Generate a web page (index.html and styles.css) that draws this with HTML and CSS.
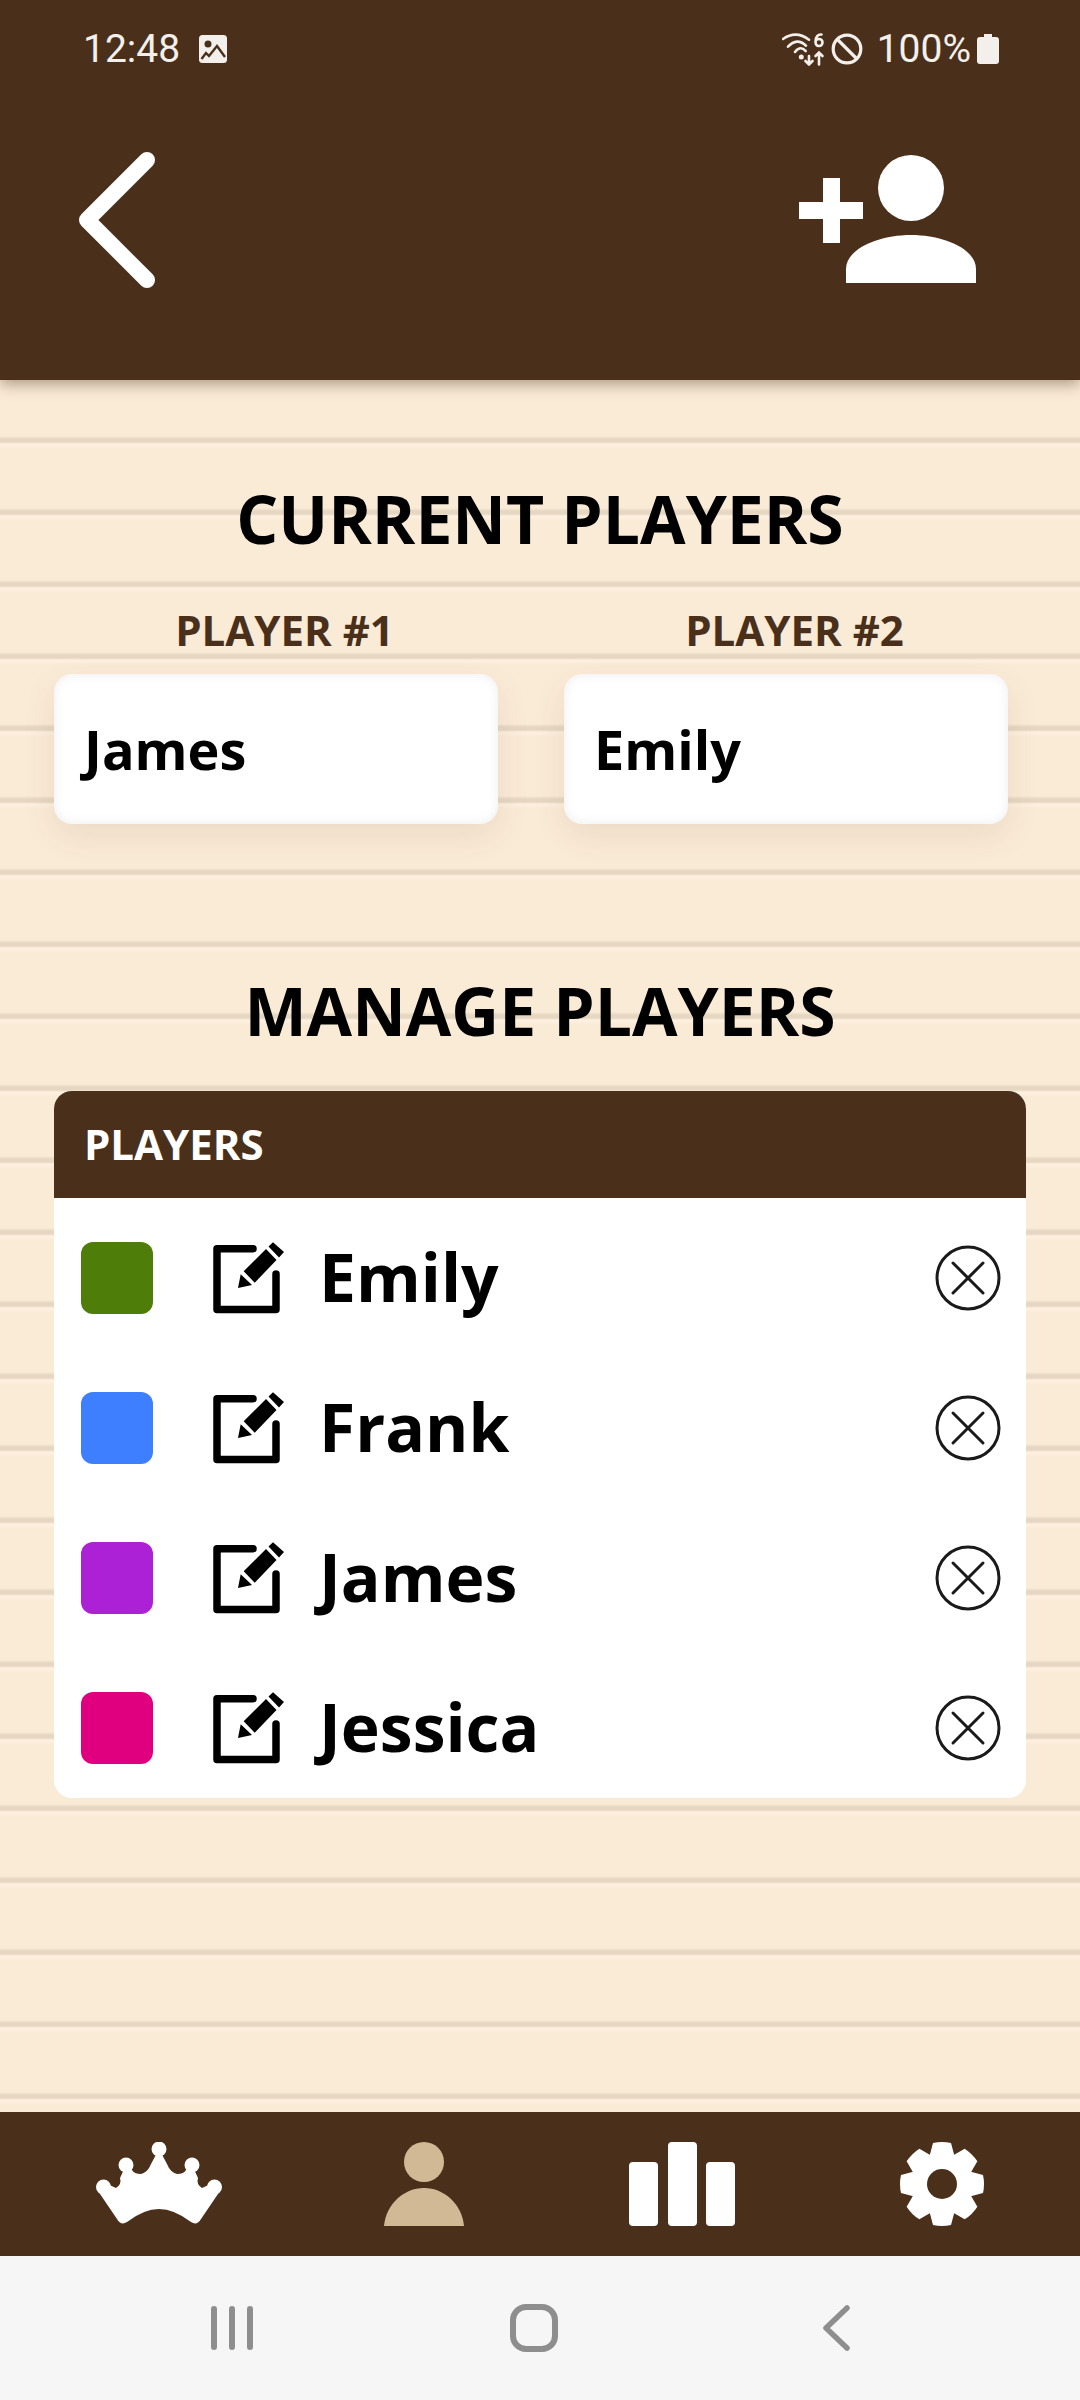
FILE: index.html
```html
<!DOCTYPE html>
<html lang="en">
<head>
  <meta charset="UTF-8" />
  <title>Players</title>
  <link rel="stylesheet" href="styles.css">
</head>
<body>
  <header class="top">
    <div class="status">
      <div class="status-left">
        <span class="clock">12:48</span>
        <svg class="pic-icon" viewBox="0 0 28 28">
          <rect width="28" height="28" rx="3.500" fill="#f3f0ec"/>
          <circle cx="9" cy="9" r="3.500" fill="#4a301b"/>
          <path d="M2.500 24L7 18l3 3 8-10 8 11" fill="none" stroke="#4a301b" stroke-width="2.400"/>
        </svg>
      </div>
      <div class="status-right">
        <svg class="wifi-icon" viewBox="0 0 44 34" fill="none" stroke="#f3f0ec" stroke-width="2.600" stroke-linecap="round">
          <path d="M1 7Q14-2 27 7.700"/>
          <path d="M6 14.700Q15 5 24 13.700"/>
          <path d="M13 20Q18 13 23.700 19"/>
          <circle cx="19.300" cy="25" r="1.200" fill="#f3f0ec"/>
          <path d="M27 24v8.500M23.500 29l3.500 3.500 3.500-3.500"/>
          <path d="M37 20.500v12M33.500 24l3.500-3.500 3.500 3.500"/>
          <path d="M39.500 2.500C36 2 33.500 5 33.500 9.500c0 3 1.500 4.500 3.500 4.500s3.500-1.500 3.500-3.500-1.500-3.500-3.500-3.500-3.500 1.500-3.500 3"/>
        </svg>
        <svg class="ban-icon" viewBox="0 0 32 32" fill="none" stroke="#f3f0ec" stroke-width="3.200"><circle cx="16" cy="16" r="13.800"/><path d="M6.500 6.500l19 19"/></svg>
        <span class="battery-text">100%</span>
        <svg class="battery-icon" viewBox="0 0 22 30"><path fill="#f3f0ec" d="M7 0h8v3h4a3 3 0 0 1 3 3v21a3 3 0 0 1-3 3H3a3 3 0 0 1-3-3V6a3 3 0 0 1 3-3h4z"/></svg>
      </div>
    </div>
    <div class="toolbar">
      <svg class="back-icon" viewBox="0 0 80 140" fill="none" stroke="#fff" stroke-width="16" stroke-linecap="round" stroke-linejoin="round"><path d="M69 10L9 70l60 60"/></svg>
      <svg class="add-icon" viewBox="0 0 180 130" fill="#fff">
        <path d="M25 24h17v24h23v17H42v24H25V65H1V48h24z"/>
        <circle cx="113" cy="34" r="33"/>
        <path d="M48 129v-14c0-20 32-34 65-34s65 14 65 34v14z"/>
      </svg>
    </div>
  </header>

  <main class="content">
    <h2 class="heading first">CURRENT PLAYERS</h2>
    <div class="current">
      <div class="slot">
        <div class="slot-label">PLAYER #1</div>
        <div class="slot-box">James</div>
      </div>
      <div class="slot">
        <div class="slot-label">PLAYER #2</div>
        <div class="slot-box">Emily</div>
      </div>
    </div>

    <h2 class="heading second">MANAGE PLAYERS</h2>
    <section class="roster">
      <div class="roster-head">PLAYERS</div>

      <div class="row">
        <span class="swatch green"></span>
        <svg class="edit-icon" viewBox="0 0 72 72"><use href="#edit"/></svg>
        <span class="name">Emily</span>
        <svg class="remove-icon" viewBox="0 0 66 66"><use href="#remove"/></svg>
      </div>
      <div class="row">
        <span class="swatch blue"></span>
        <svg class="edit-icon" viewBox="0 0 72 72"><use href="#edit"/></svg>
        <span class="name">Frank</span>
        <svg class="remove-icon" viewBox="0 0 66 66"><use href="#remove"/></svg>
      </div>
      <div class="row">
        <span class="swatch purple"></span>
        <svg class="edit-icon" viewBox="0 0 72 72"><use href="#edit"/></svg>
        <span class="name">James</span>
        <svg class="remove-icon" viewBox="0 0 66 66"><use href="#remove"/></svg>
      </div>
      <div class="row">
        <span class="swatch pink"></span>
        <svg class="edit-icon" viewBox="0 0 72 72"><use href="#edit"/></svg>
        <span class="name">Jessica</span>
        <svg class="remove-icon" viewBox="0 0 66 66"><use href="#remove"/></svg>
      </div>
    </section>
  </main>

  <nav class="tabs">
    <svg class="tab crown" viewBox="0 0 126 84" fill="#fff">
      <circle cx="63" cy="7" r="7.500"/>
      <circle cx="30" cy="23" r="7.500"/>
      <circle cx="96" cy="23" r="7.500"/>
      <circle cx="7.500" cy="45" r="7.500"/>
      <circle cx="118.500" cy="45" r="7.500"/>
      <path d="M2 49L21 77Q25 84 31 80Q48 67 63 67Q78 67 95 80Q101 84 105 77L124 49L117 41L106 46Q100 42 102 36L96 23L90 28Q88 32 81 32Q74 30 71 22L63 7L55 22Q52 30 45 32Q38 32 36 28L30 23L24 36Q26 42 20 46L9 41Z"/>
    </svg>
    <svg class="tab person" viewBox="0 0 80 84" fill="#d2b995"><circle cx="40" cy="20" r="20"/><path d="M0 84C2 62 20 46 40 46s38 16 40 38z"/></svg>
    <div class="tab bars">
      <span class="bar short"></span>
      <span class="bar tall"></span>
      <span class="bar short"></span>
    </div>
    <svg class="tab gear" viewBox="0 0 84 84">
      <g fill="#fff">
        <use href="#tooth"/>
        <use href="#tooth" transform="rotate(45 42 42)"/>
        <use href="#tooth" transform="rotate(90 42 42)"/>
        <use href="#tooth" transform="rotate(135 42 42)"/>
        <circle cx="42" cy="42" r="30"/>
      </g>
      <circle cx="42" cy="42" r="15" fill="#4a301b"/>
    </svg>
  </nav>

  <div class="system-nav">
    <svg class="sys-icon recents" viewBox="0 0 42 44" fill="#8e8e8e"><rect x="0" width="6" height="44" rx="3"/><rect x="18" width="6" height="44" rx="3"/><rect x="36" width="6" height="44" rx="3"/></svg>
    <svg class="sys-icon home" viewBox="0 0 48 48" fill="none" stroke="#8e8e8e" stroke-width="6"><rect x="3" y="3" width="42" height="42" rx="13"/></svg>
    <svg class="sys-icon sys-back" viewBox="0 0 28 46" fill="none" stroke="#8e8e8e" stroke-width="5.500" stroke-linecap="round" stroke-linejoin="round"><path d="M25 3L4 23l21 20"/></svg>
  </div>

  <svg class="defs" width="0" height="0">
    <defs>
      <path id="tooth" d="M33 1Q42-1 51 1L55 16V68L51 83Q42 85 33 83L29 68V16Z"/>
      <g id="edit">
        <path fill="none" stroke="#000" stroke-width="7.500" stroke-linecap="round" stroke-linejoin="round" d="M40 6.700H4V67.500H63V32"/>
        <path d="M25 46L27.700 32.300L39 43ZM30.700 29.300L53 7L63.500 18L41.700 40.700ZM55.500 4.500L60 .3L71 10L66 15.500Z"/>
      </g>
      <g id="remove" fill="none" stroke="#1a1a1a" stroke-width="3" stroke-linecap="round">
        <circle cx="33" cy="33" r="31"/>
        <path d="M18 18l30 30M48 18L18 48"/>
      </g>
    </defs>
  </svg>
</body>
</html>
```

FILE: styles.css
```css
* {
  box-sizing: border-box;
}

html, body {
  margin: 0;
  padding: 0;
}

body {
  width: 1080px;
  height: 2400px;
  display: flex;
  flex-direction: column;
  overflow: hidden;
  font-family: 'Open Sans', sans-serif;
  background-color: #faebd7;
  color: #000;
}

/* top bar */
.top {
  height: 380px;
  flex: none;
  background-color: #4a301b;
  box-shadow: 0 4px 14px rgba(74, 48, 27, 0.45);
  position: relative;
  z-index: 2;
}

.status {
  height: 98px;
  padding: 0 81px 0 83px;
  display: flex;
  justify-content: space-between;
  align-items: center;
  color: #f3f0ec;
  font-family: Roboto, sans-serif;
  font-size: 39px;
}

.status-left, .status-right {
  display: flex;
  align-items: center;
}

.pic-icon {
  width: 28px;
  height: 28px;
  margin-left: 19px;
}

.wifi-icon {
  width: 44px;
  height: 34px;
}

.ban-icon {
  width: 32px;
  height: 32px;
  margin-left: 5px;
}

.battery-text {
  margin-left: 14px;
}

.battery-icon {
  width: 22px;
  height: 30px;
  margin-left: 6px;
}

.toolbar {
  padding: 52px 102px 0 78px;
  display: flex;
  justify-content: space-between;
  align-items: flex-start;
}

.back-icon {
  width: 80px;
  height: 140px;
}

.add-icon {
  width: 180px;
  height: 130px;
  margin-top: 4px;
}

/* ruled paper background */
.content {
  flex: 1;
  padding: 0 54px;
  background-color: #faebd7;
  background-image: repeating-linear-gradient(
    to bottom,
    transparent 0,
    transparent 56px,
    #e6d7c3 59px,
    #e6d7c3 62px,
    #fdf0de 64px,
    #fdf0de 66px,
    transparent 68px,
    transparent 72px
  );
}

.heading {
  margin: 0;
  text-align: center;
  font-size: 66px;
  font-weight: 700;
  line-height: 84px;
}

.first {
  margin-top: 96px;
}

.second {
  margin-top: 144px;
}

.current {
  display: flex;
  gap: 66px;
  margin-top: 42px;
}

.slot {
  width: 444px;
}

.slot-label {
  padding-left: 17px;
  text-align: center;
  font-size: 42px;
  font-weight: 700;
  line-height: 56px;
  color: #4a301b;
}

.slot-box {
  height: 150px;
  margin-top: 16px;
  padding-left: 30px;
  display: flex;
  align-items: center;
  font-size: 54px;
  font-weight: 700;
  background-color: #fff;
  border-radius: 18px;
  box-shadow: 0 12px 34px rgba(74, 48, 27, 0.09), inset 0 0 12px rgba(0, 0, 0, 0.07);
}

/* player list */
.roster {
  margin-top: 39px;
  width: 972px;
  height: 707px;
  background-color: #fff;
  border-radius: 18px;
  overflow: hidden;
}

.roster-head {
  height: 107px;
  margin-bottom: 5px;
  padding: 0 0 3px 30px;
  display: flex;
  align-items: center;
  font-size: 42px;
  font-weight: 700;
  color: #fff;
  background-color: #4a301b;
}

.row {
  height: 150px;
  padding: 0 25px 0 27px;
  display: flex;
  align-items: center;
}

.swatch {
  width: 72px;
  height: 72px;
  border-radius: 12px;
}

.green { background-color: #4f7d09; }
.blue { background-color: #3e7fff; }
.purple { background-color: #ac20d6; }
.pink { background-color: #e0007f; }

.edit-icon {
  width: 72px;
  height: 72px;
  margin-left: 60px;
}

.name {
  flex: 1;
  margin-left: 34px;
  padding-bottom: 5px;
  font-size: 66px;
  font-weight: 700;
}

.remove-icon {
  width: 66px;
  height: 66px;
}

/* bottom tabs */
.tabs {
  height: 144px;
  flex: none;
  display: flex;
  align-items: center;
  padding: 0 96px;
  background-color: #4a301b;
}

.crown {
  width: 126px;
  height: 84px;
}

.person {
  width: 80px;
  height: 84px;
  margin-left: 162px;
}

.bars {
  width: 106px;
  height: 84px;
  margin-left: 165px;
  display: flex;
  justify-content: space-between;
  align-items: flex-end;
}

.bar {
  width: 29px;
  background-color: #fff;
  border-radius: 4px;
}

.short { height: 64px; }
.tall { height: 84px; }

.gear {
  width: 84px;
  height: 84px;
  margin-left: 165px;
}

/* android nav */
.system-nav {
  height: 144px;
  flex: none;
  display: flex;
  align-items: center;
  padding-left: 211px;
  background-color: #f6f6f6;
}

.recents {
  width: 42px;
  height: 44px;
}

.home {
  width: 48px;
  height: 48px;
  margin-left: 257px;
}

.sys-back {
  width: 28px;
  height: 46px;
  margin-left: 264px;
}

.defs {
  position: absolute;
}
```
